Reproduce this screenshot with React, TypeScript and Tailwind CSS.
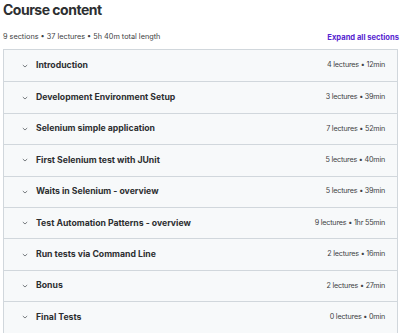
const sections = [
  { title: "Introduction", meta: "4 lectures • 12min" },
  { title: "Development Environment Setup", meta: "3 lectures • 39min" },
  { title: "Selenium simple application", meta: "7 lectures • 52min" },
  { title: "First Selenium test with JUnit", meta: "5 lectures • 40min" },
  { title: "Waits in Selenium - overview", meta: "5 lectures • 39min" },
  { title: "Test Automation Patterns - overview", meta: "9 lectures • 1hr 55min" },
  { title: "Run tests via Command Line", meta: "2 lectures • 16min" },
  { title: "Bonus", meta: "2 lectures • 27min" },
  { title: "Final Tests", meta: "0 lectures • 0min" },
];

const Chevron = () => (
  <svg width="8" height="8" viewBox="0 0 8 8" fill="none" className="shrink-0">
    <path d="M1.8 3 L4 5 L6.2 3" stroke="#6a6f73" strokeWidth="0.9" />
  </svg>
);

const App = () => {
  return (
    <div className="w-[400px] h-[333px] bg-white overflow-hidden text-[#2d2f31] font-['Inter',sans-serif]">
      <h2 className="pl-[3px] pt-[1px] text-[14px] leading-[18px] font-bold tracking-[-0.5px]">
        Course content
      </h2>
      <div className="flex items-end justify-between pl-[3px] pr-[1px] mt-[13px] h-[11px]">
        <span className="text-[7.3px] text-[#3e4143]">
          9 sections • 37 lectures • 5h 40m total length
        </span>
        <span className="text-[7.6px] font-bold text-[#5624d0]">Expand all sections</span>
      </div>
      <ul className="mx-[3px] mt-[6px] border border-[#d1d7dc] w-[395px]">
        {sections.map((s, i) => (
          <li
            key={s.title}
            className={
              "flex items-center h-[31.4px] bg-[#f7f9fa] pl-[17px] pr-[12px] " +
              (i > 0 ? "border-t border-[#d1d7dc]" : "")
            }
          >
            <Chevron />
            <span className="ml-[7px] text-[8.7px] font-bold flex-1">{s.title}</span>
            <span className="text-[7.2px] tracking-[-0.2px] text-[#3e4143]">{s.meta}</span>
          </li>
        ))}
      </ul>
    </div>
  );
};

export default App;
